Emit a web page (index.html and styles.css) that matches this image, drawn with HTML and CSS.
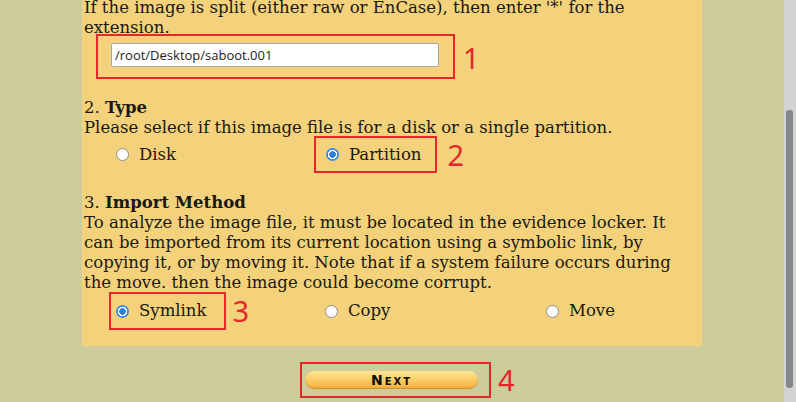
FILE: index.html
```html
<!DOCTYPE html>
<html>
<head>
<meta charset="utf-8">
<link rel="stylesheet" href="styles.css">
</head>
<body>
<div class="layout">
  <div class="main">
    <div class="panel">
      <p class="para">If the image is split (either raw or EnCase), then enter '*' for the extension.</p>
      <div class="markrow input-row">
        <div class="mark mark-1"><input class="path" type="text" value="/root/Desktop/saboot.001"></div>
        <span class="num">1</span>
      </div>

      <p class="para sec-type">2. <b>Type</b><br>Please select if this image file is for a disk or a single partition.</p>
      <div class="opts opts-type">
        <label class="opt opt-disk"><input type="radio" name="type"><span>Disk</span></label>
        <div class="markrow">
          <label class="opt mark mark-2"><input type="radio" name="type" checked><span>Partition</span></label>
          <span class="num">2</span>
        </div>
      </div>

      <p class="para sec-import">3. <b>Import Method</b><br>To analyze the image file, it must be located in the evidence locker. It can be imported from its current location using a symbolic link, by copying it, or by moving it. Note that if a system failure occurs during the move. then the image could become corrupt.</p>
      <div class="opts opts-import">
        <div class="markrow">
          <label class="opt mark mark-3"><input type="radio" name="imp" checked><span>Symlink</span></label>
          <span class="num">3</span>
        </div>
        <label class="opt opt-copy"><input type="radio" name="imp"><span>Copy</span></label>
        <label class="opt opt-move"><input type="radio" name="imp"><span>Move</span></label>
      </div>
    </div>

    <div class="markrow btn-row">
      <div class="mark mark-4"><span class="next">Next</span></div>
      <span class="num">4</span>
    </div>
  </div>
  <div class="scrollbar"><div class="thumb"></div></div>
</div>
</body>
</html>
```
FILE: styles.css
```css
html, body {
  margin: 0;
  padding: 0;
  height: 402px;
  overflow: hidden;
}
body {
  background: #cdcd9b;
  font-family: "DejaVu Serif", serif;
  font-size: 16.5px;
  line-height: 20px;
  color: #1a1814;
}
.layout {
  display: flex;
  height: 402px;
}
.main {
  flex: 1;
}
.panel {
  width: 620px;
  margin: -2px auto 0;
  padding: 0 0 0 2px;
  background: #f4d27b;
  height: 348px;
  box-sizing: border-box;
}
.para {
  margin: 0;
  width: 604px;
}
.markrow {
  display: flex;
  align-items: center;
}
.mark {
  border: 2px solid #e5262b;
  box-sizing: border-box;
}
.num {
  font-family: "Noto Sans", "Open Sans", sans-serif;
  font-size: 29px;
  line-height: 30px;
  color: #e5262b;
}
.input-row {
  margin: -4px 0 0 12px;
}
.mark-1 {
  padding: 7px 14px 10px 13px;
}
.input-row .num {
  margin-left: 8px;
  margin-top: 2px;
}
.path {
  display: block;
  width: 328px;
  height: 24px;
  box-sizing: border-box;
  border: 1px solid #a8a8a8;
  border-radius: 2px;
  background: #fff;
  font-family: "Open Sans", "Noto Sans", sans-serif;
  font-size: 13px;
  color: #222;
  padding: 0 0 0 3px;
  margin: 0;
}
.sec-type {
  margin-top: 19px;
}
.sec-import {
  margin-top: 20px;
}
.opts {
  display: grid;
  align-items: center;
}
.opts-type {
  grid-template-columns: 205px auto;
  margin: -2px 0 0 25px;
  height: 37px;
}
.opts-import {
  grid-template-columns: 216px 221px auto;
  margin: -1px 0 0 25px;
  height: 38px;
}
.opt {
  display: inline-flex;
  align-items: center;
  font-size: 16.5px;
  line-height: 20px;
}
.opt input {
  -webkit-appearance: none;
  appearance: none;
  width: 13px;
  height: 13px;
  margin: 0 10px 0 0;
  border-radius: 50%;
  border: 1px solid #8d8d8d;
  background: #fff;
  box-sizing: border-box;
  flex: none;
}
.opt input:checked {
  border: none;
  background: radial-gradient(circle, #2f7de1 0 3px, #fff 3.6px 4.4px, #3e8ae8 5px);
}
.opt-disk {
  padding-left: 7px;
}
.mark-2 {
  height: 37px;
  padding: 0 14px 0 10px;
}
.opts-type .num {
  margin-left: 10px;
}
.mark-3 {
  height: 38px;
  padding: 0 18px 0 5px;
}
.opts-import .num {
  margin-left: 6px;
}
.opt-copy {
  padding-left: 0;
}
.opt-move {
  padding-left: 0;
}
.btn-row {
  margin: 16px 0 0 300px;
}
.mark-4 {
  width: 191px;
  height: 36px;
  display: flex;
  align-items: center;
  padding-left: 3px;
}
.next {
  display: block;
  width: 173px;
  height: 18px;
  border-radius: 9px;
  background: linear-gradient(#ffe79a 0%, #fcd06a 45%, #f4ad3c 100%);
  box-shadow: inset 0 -1px 1px rgba(190,110,20,0.5);
  text-align: center;
  font-family: "DejaVu Sans", sans-serif;
  font-weight: bold;
  font-variant: small-caps;
  font-size: 14px;
  line-height: 18px;
  letter-spacing: 2px;
  color: #120d05;
}
.btn-row .num {
  margin-left: 7px;
}
.scrollbar {
  width: 12px;
  background: #d3d3d3;
  padding: 110px 3px 14px 2px;
  box-sizing: border-box;
}
.thumb {
  height: 278px;
  border-radius: 3px;
  background: #83878a;
}
```
